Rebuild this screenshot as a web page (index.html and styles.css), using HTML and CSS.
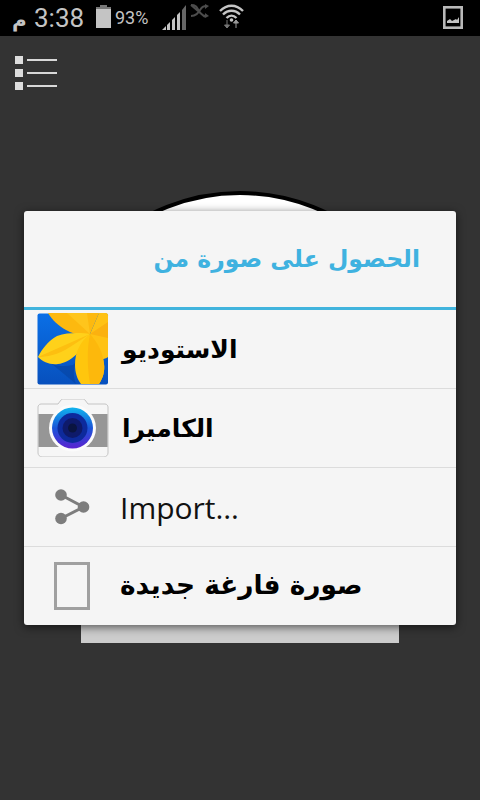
FILE: index.html
```html
<!DOCTYPE html>
<html lang="ar">
<head>
  <meta charset="UTF-8">
  <meta name="viewport" content="width=device-width, initial-scale=1.0">
  <title>Get image</title>
  <link rel="stylesheet" href="styles.css">
</head>
<body>
  <!-- Status bar -->
  <div class="status-bar" dir="ltr">
    <span class="status-ampm">م</span>
    <span class="status-time">3:38</span>
    <svg class="battery-icon" width="15" height="23" viewBox="0 0 15 23">
      <rect x="4" y="0" width="7" height="2" fill="#777"/>
      <rect x="0" y="2" width="15" height="21" fill="#c4c4c4"/>
      <rect x="0" y="2" width="15" height="2" fill="#777"/>
    </svg>
    <span class="status-battery">93%</span>
    <svg class="signal-icon" width="25" height="25" viewBox="0 0 25 25">
      <path d="M0 25l4-4v4z" fill="#c4c4c4"/>
      <path d="M5 25v-5l3-3v8z" fill="#c4c4c4"/>
      <path d="M10 25v-10l3-3v13z" fill="#c4c4c4"/>
      <path d="M15 25v-15l3-3v18z" fill="#c4c4c4"/>
      <path d="M20 25v-20l4-5v25z" fill="#666"/>
    </svg>
    <svg class="mute-icon" width="21" height="14" viewBox="0 0 21 14">
      <path d="M1 1c6 0 6 3 8 6s4 5 7 5M1 1l14 12M1 12c5 0 7-3 9-6s3-4 7-4" fill="none" stroke="#4c4c4c" stroke-width="2"/>
      <path d="M15 0l4 2-4 3zM15 9l4 3-4 2z" fill="#4c4c4c"/>
    </svg>
    <svg class="wifi-icon" width="25" height="25" viewBox="0 0 25 25">
      <path d="M1 7c7-7 16-7 23 0M4 10.500c5-5 12-5 17 0M7.500 14c3-3 7-3 10 0" fill="none" stroke="#c4c4c4" stroke-width="2.400"/>
      <circle cx="12.500" cy="16" r="1.800" fill="#c4c4c4"/>
      <path d="M8 16v8M5.500 21l2.500 3 2.500-3z" fill="#777" stroke="#777"/>
      <path d="M17 24v-8M14.500 19l2.500-3 2.500 3z" fill="#999" stroke="#999"/>
    </svg>
    <svg class="gallery-icon" width="20" height="23" viewBox="0 0 20 23">
      <rect x="1.300" y="1.300" width="17.400" height="20.400" fill="#000" stroke="#b9b9b9" stroke-width="2.600"/>
      <path d="M4 17v-2l3-2 2 2 4-2 1 1 2-3v6z" fill="#c4c4c4"/>
    </svg>
  </div>

  <!-- App behind the dialog -->
  <div class="app">
    <div class="menu-icon">
      <div class="menu-line"><span class="menu-dot"></span><span class="menu-bar"></span></div>
      <div class="menu-line"><span class="menu-dot"></span><span class="menu-bar"></span></div>
      <div class="menu-line"><span class="menu-dot"></span><span class="menu-bar"></span></div>
    </div>
    <div class="canvas-circle"></div>
    <div class="canvas-sheet"></div>

    <!-- Chooser dialog -->
    <div class="dialog">
      <div class="dialog-title">الحصول على صورة من</div>
      <div class="dialog-row">
        <svg class="app-icon" width="72" height="72" viewBox="0 0 72 72">
          <defs>
            <linearGradient id="sky" x1="0" y1="0" x2="0" y2="1">
              <stop offset="0" stop-color="#0a6fe6"/>
              <stop offset="1" stop-color="#0750bd"/>
            </linearGradient>
            <linearGradient id="lens" x1="0" y1="0" x2="0" y2="1">
              <stop offset="0" stop-color="#10b4ee"/>
              <stop offset="0.500" stop-color="#1a55d8"/>
              <stop offset="1" stop-color="#5a22d0"/>
            </linearGradient>
          </defs>
          <rect x="0.500" y="0.500" width="70.500" height="71" rx="2" fill="url(#sky)"/>
          <path d="M39 71c-3-7-3-14 0-22l-3 3c-8 2-16 1-21-1z" fill="#0642a0" opacity="0.600"/>
          <path d="M71 2v42c-6 4-10 2-14-4L53 21l9-21h7c1 0 2 1 2 2z" fill="#ffc214"/>
          <path d="M53 21 71 9v16z" fill="#fbb110"/>
          <path d="M11 0h51l-9 21c-9 2-17 0-24-4C22 13 15 7 11 0z" fill="#fdb90f"/>
          <path d="M53 21 30 0h20z" fill="#ffc51c"/>
          <path d="M53 21C45 20 32 19 20 23 11 28 5 36 1 44c5 5 12 8 20 7 12-1 25-13 32-30z" fill="#ffd11a"/>
          <path d="M53 21C44 28 38 38 38 52c0 7 2 14 6 19h18c4-6 6-13 5-20-1-11-6-21-14-30z" fill="#ffc60d"/>
          <path d="M53 21c-3 14-3 32 0 50h9c4-6 6-13 5-20-1-11-6-21-14-30z" fill="#fdb80c"/>
          <path d="M53 21 1 44c8 0 20-2 32-10z" fill="#fdbf10"/>
        </svg>
        <span class="row-label">الاستوديو</span>
      </div>
      <div class="dialog-row">
        <svg class="app-icon" width="72" height="58" viewBox="-1 0 72 58">
          <path d="M0 8c0-1 1-3 3-3h17l3-4c1-1 2-1 3-1h18c1 0 2 0 3 1l3 4h17c2 0 3 2 3 3v46c0 2-2 4-4 4H4c-2 0-4-2-4-4z" fill="#f6f6f6" stroke="#c4c4c4"/>
          <rect x="0.500" y="15" width="69" height="33" fill="#969696"/>
          <circle cx="34.500" cy="29" r="23.500" fill="#fbfbfb"/>
          <circle cx="34.500" cy="29" r="20.500" fill="url(#lens)"/>
          <circle cx="34.500" cy="29" r="15" fill="#0d2a9c"/>
          <circle cx="34.500" cy="29" r="10" fill="#0e1a6a"/>
          <circle cx="34.500" cy="29" r="4.500" fill="#0a1440"/>
        </svg>
        <span class="row-label">الكاميرا</span>
      </div>
      <div class="dialog-row">
        <svg class="share-icon" width="36" height="36" viewBox="0 0 36 36">
          <path d="M6 6l22.500 12L6 29.500" fill="none" stroke="#7d7d7d" stroke-width="3"/>
          <circle cx="6" cy="6" r="5.800" fill="#7d7d7d"/>
          <circle cx="28.500" cy="18" r="5.800" fill="#7d7d7d"/>
          <circle cx="6" cy="29.500" r="5.800" fill="#7d7d7d"/>
        </svg>
        <span class="row-label row-label-latin">Import…</span>
      </div>
      <div class="dialog-row">
        <span class="blank-icon"></span>
        <span class="row-label row-label-wide">صورة فارغة جديدة</span>
      </div>
    </div>
  </div>
</body>
</html>
```

FILE: styles.css
```css
/* Reset some default styles */
* {
  box-sizing: border-box;
  margin: 0;
  padding: 0;
}

body {
  width: 480px;
  height: 800px;
  overflow: hidden;
  font-family: "DejaVu Sans", sans-serif;
  background-color: #333333;
}

/* Status bar */
.status-bar {
  display: flex;
  align-items: flex-start;
  height: 36px;
  padding-left: 12px;
  background-color: #000000;
  color: #c4c4c4;
  line-height: 36px;
}

.status-ampm {
  font-size: 20px;
  font-weight: bold;
  width: 22px;
  margin-top: 2px;
}

.status-time {
  font-family: Roboto, sans-serif;
  font-size: 26px;
  width: 62px;
}

.battery-icon {
  margin-top: 5px;
  margin-right: 4px;
}

.status-battery {
  font-family: Roboto, sans-serif;
  font-size: 18px;
  width: 47px;
}

.signal-icon {
  margin-top: 5px;
  margin-right: 3px;
}

.mute-icon {
  margin-top: 4px;
  margin-right: 8px;
}

.wifi-icon {
  margin-top: 4px;
}

.gallery-icon {
  margin-top: 6px;
  margin-left: auto;
  margin-right: 17px;
}

/* App behind the dialog */
.app {
  position: relative;
  height: 764px;
}

.menu-icon {
  display: flex;
  flex-direction: column;
  gap: 5px;
  padding: 20px 0 0 15px;
}

.menu-line {
  display: flex;
  align-items: center;
  gap: 4px;
}

.menu-dot {
  width: 8px;
  height: 8px;
  background-color: #dddddd;
}

.menu-bar {
  width: 30px;
  height: 2px;
  background-color: #d8d8d8;
}

.canvas-circle {
  position: absolute;
  left: 40px;
  top: 155px;
  width: 400px;
  height: 400px;
  border: 4px solid #000000;
  border-radius: 50%;
  background-color: #ffffff;
}

.canvas-sheet {
  position: absolute;
  left: 81px;
  top: 560px;
  width: 318px;
  height: 47px;
  background-color: #cccccc;
}

/* Chooser dialog */
.dialog {
  position: absolute;
  left: 24px;
  top: 175px;
  width: 432px;
  height: 414px;
  background-color: #f5f5f5;
  border-radius: 3px;
  box-shadow: 0 2px 10px rgba(0, 0, 0, 0.6);
}

.dialog-title {
  height: 99px;
  padding-right: 36px;
  display: flex;
  align-items: center;
  direction: rtl;
  font-size: 23.500px;
  font-weight: bold;
  color: #3fb2e0;
  border-bottom: 3px solid #41b4dd;
}

.dialog-row {
  display: flex;
  align-items: center;
  height: 79px;
  border-bottom: 1px solid #dcdcdc;
  gap: 13px;
}

.dialog-row:last-child {
  border-bottom: none;
  height: 78px;
}

.app-icon {
  flex: none;
  margin-left: 13px;
}

.share-icon {
  flex: none;
  margin-left: 31px;
  margin-right: 16px;
}

.blank-icon {
  width: 36px;
  height: 48px;
  margin-left: 30px;
  margin-right: 17px;
  border: 3px solid #a0a0a0;
}

.row-label {
  font-size: 25px;
  font-weight: bold;
  color: #000000;
  direction: rtl;
}

.row-label-wide {
  font-size: 26.400px;
  margin-bottom: 3px;
}

.row-label-latin {
  font-family: "Open Sans", sans-serif;
  font-size: 30px;
  font-weight: normal;
  color: #111111;
  direction: ltr;
}
```
